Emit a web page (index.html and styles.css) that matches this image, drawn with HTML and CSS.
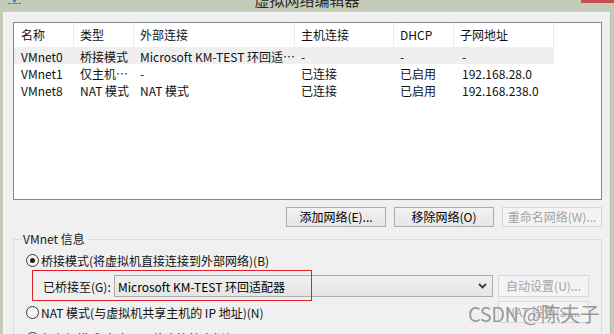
FILE: index.html
```html
<!DOCTYPE html>
<html lang="zh-CN">
<head>
    <meta charset="UTF-8">
    <title>虚拟网络编辑器</title>
    <link rel="stylesheet" href="styles.css">
</head>
<body>
    <div class="titlebar">
        <svg class="app-icon" width="14" height="5" viewBox="0 0 14 5">
            <rect x="5" y="0" width="3" height="2" fill="#2a8ad4"/>
            <rect x="0" y="3" width="3" height="1" fill="#2a8ad4"/>
            <rect x="4" y="3" width="5" height="1" fill="#2a8ad4"/>
            <rect x="10" y="3" width="3" height="1" fill="#2a8ad4"/>
        </svg>
        <div class="title">虚拟网络编辑器</div>
        <div class="close"></div>
    </div>

    <div class="window">
        <div class="netlist">
            <div class="grid">
                <div class="hd">名称</div>
                <div class="hd">类型</div>
                <div class="hd">外部连接</div>
                <div class="hd">主机连接</div>
                <div class="hd">DHCP</div>
                <div class="hd">子网地址</div>

                <div class="row selected">
                    <span>VMnet0</span><span>桥接模式</span><span>Microsoft KM-TEST 环回适…</span><span>-</span><span>-</span><span>-</span>
                </div>
                <div class="row">
                    <span>VMnet1</span><span>仅主机…</span><span>-</span><span>已连接</span><span>已启用</span><span>192.168.28.0</span>
                </div>
                <div class="row">
                    <span>VMnet8</span><span>NAT 模式</span><span>NAT 模式</span><span>已连接</span><span>已启用</span><span>192.168.238.0</span>
                </div>
            </div>
        </div>

        <div class="actions">
            <button class="btn">添加网络(E)...</button>
            <button class="btn">移除网络(O)</button>
            <button class="btn off">重命名网络(W)...</button>
        </div>

        <fieldset class="group">
            <legend>VMnet 信息</legend>
            <div class="group-body">
                <div class="opt"><span class="radio on"></span>桥接模式(将虚拟机直接连接到外部网络)(B)</div>
                <div class="opt bridge">
                    <span class="mark"></span>
                    <span class="lbl">已桥接至(G):</span>
                    <div class="combo">
                        <span>Microsoft KM-TEST 环回适配器</span>
                        <svg width="9" height="6" viewBox="0 0 9 6"><path d="M1 1 L4.5 4.5 L8 1" fill="none" stroke="#3c3c3c" stroke-width="1.8"/></svg>
                    </div>
                    <button class="btn off side">自动设置(U)...</button>
                </div>
                <div class="opt"><span class="radio"></span>NAT 模式(与虚拟机共享主机的 IP 地址)(N)<button class="btn off side">NAT 设置(S)...</button></div>
                <div class="opt"><span class="radio"></span>仅主机模式(在专用网络内连接虚拟机)(H)</div>
            </div>
        </fieldset>
    </div>

    <div class="watermark">CSDN @陈夫子</div>
</body>
</html>
```

FILE: styles.css
```css
body {
    margin: 0;
    width: 614px;
    height: 334px;
    padding: 0 3px;
    box-sizing: border-box;
    overflow: hidden;
    position: relative;
    display: flex;
    flex-direction: column;
    background-color: #c4ccb9;
    font-family: "Noto Sans CJK SC", "Noto Sans", sans-serif;
    font-size: 12px;
    color: #111;
}

.titlebar {
    height: 12px;
    flex: none;
    display: grid;
    grid-template-columns: 1fr auto 1fr;
    align-items: start;
}

.app-icon {
    display: block;
    margin-left: 5px;
}

.title {
    font-size: 15px;
    line-height: 15px;
    margin-top: -8px;
    color: #2c2c2c;
}

.close {
    justify-self: end;
    width: 33px;
    height: 3px;
    margin-right: -3px;
    background-color: #c75050;
}

.window {
    flex: 1;
    background-color: #f0f0f0;
    border-top: 1px solid #f7f7f7;
    border-left: 1px solid #f7f7f7;
    border-right: 1px solid #b3baac;
    padding: 9px 8px 0 9px;
}

.netlist {
    height: 176px;
    border: 1px solid #828790;
    background-color: #fff;
}

.grid {
    display: grid;
    grid-template-columns: 60px 60px 161px 99px 60px 100px;
    width: 540px;
}

.hd {
    height: 24px;
    line-height: 24px;
    padding-left: 6px;
    border-right: 1px solid #e4ecf5;
    box-sizing: border-box;
}

.hd:first-child,
.row span:first-child {
    padding-left: 7px;
}

.row {
    display: contents;
}

.row span {
    height: 17px;
    line-height: 17px;
    padding: 1px 0 0 6px;
    box-sizing: border-box;
    white-space: nowrap;
    overflow: hidden;
}

.row.selected span {
    background-color: #efefef;
}

.row span:nth-child(6) {
    padding-left: 8px;
}

.actions {
    display: flex;
    justify-content: flex-end;
    gap: 8px;
    margin-top: 7px;
}

.btn {
    width: 100px;
    height: 20px;
    padding: 0;
    font: inherit;
    line-height: 18px;
    color: #000;
    border: 1px solid #acacac;
    background: linear-gradient(#f2f2f2, #e6e6e6);
}

.btn.off {
    color: #a3a3a3;
    border-color: #d9d9d9;
    background: #f4f4f4;
}

.group {
    margin: 4px 0 0;
    padding: 0;
    min-width: 0;
    border: 1px solid #dcdcdc;
}

.group legend {
    margin-left: 7px;
    padding: 0 2px;
    line-height: 16px;
    color: #1a1a1a;
}

.group-body {
    padding: 0 12px;
}

.opt {
    height: 26px;
    display: flex;
    align-items: center;
    position: relative;
    white-space: nowrap;
}

.radio {
    width: 11px;
    height: 11px;
    margin-right: 2px;
    border: 1px solid #3a3a3a;
    border-radius: 50%;
    background: radial-gradient(#fff, #ececec);
    position: relative;
    flex: none;
}

.radio.on:after {
    content: '';
    position: absolute;
    left: 3px;
    top: 3px;
    width: 5px;
    height: 5px;
    border-radius: 50%;
    background-color: #1c1c1c;
}

.lbl {
    width: 71px;
    margin-left: 17px;
}

.combo {
    width: 379px;
    height: 22px;
    box-sizing: border-box;
    border: 1px solid #acacac;
    background: linear-gradient(#f0f0f0, #e5e5e5);
    display: flex;
    align-items: center;
    justify-content: space-between;
    padding: 0 5px 0 3px;
    color: #000;
}

.btn.side {
    width: 91px;
    height: 22px;
    margin-left: auto;
}

.mark {
    position: absolute;
    left: 6px;
    top: -3px;
    width: 280px;
    height: 31px;
    box-sizing: border-box;
    border: 1px solid #e3202a;
}

.watermark {
    position: absolute;
    left: 468px;
    top: 302px;
    font-size: 20px;
    line-height: 24px;
    color: rgba(120, 120, 120, 0.75);
    text-shadow: 0 0 1px rgba(255, 255, 255, 0.8);
    letter-spacing: -0.5px;
}
```
